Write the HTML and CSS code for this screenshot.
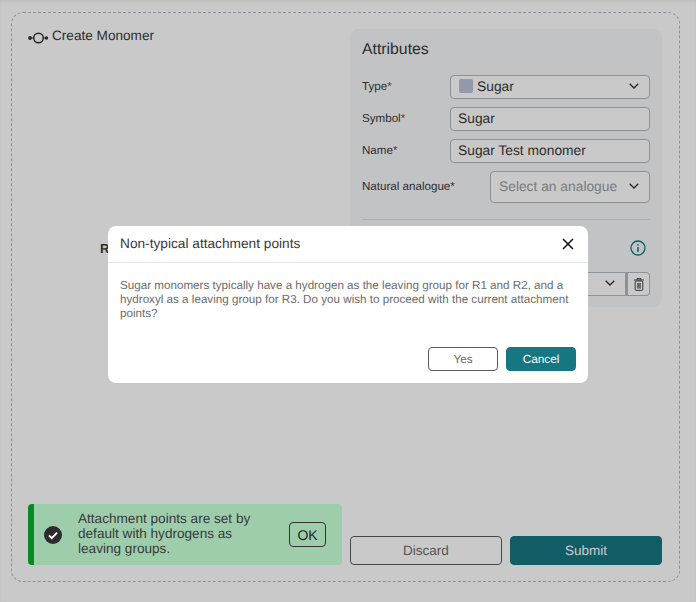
FILE: index.html
```html
<!DOCTYPE html>
<html lang="en">
<head>
    <meta charset="UTF-8">
    <title>Create Monomer</title>
    <link rel="stylesheet" href="styles.css">
</head>
<body>
<div class="wizard">
    <div class="left-col">
        <div class="title">
            <svg class="title-icon" width="21" height="12" viewBox="0 0 21 12">
                <circle cx="2" cy="6" r="1.9" fill="#333"/>
                <circle cx="18.5" cy="6" r="1.7" fill="#333"/>
                <path d="M3 6h3M15 6h3" stroke="#333" stroke-width="1.2"/>
                <circle cx="10.5" cy="6" r="4.8" fill="none" stroke="#333" stroke-width="1.5"/>
            </svg>
            <span>Create Monomer</span>
        </div>
        <span class="atom-label">R</span>
        <div class="toast">
            <svg class="toast-icon" width="18" height="18" viewBox="0 0 18 18">
                <circle cx="9" cy="9" r="9" fill="#2c2c2c"/>
                <path d="M5 9.4l2.8 2.7L13 6.6" fill="none" stroke="#fff" stroke-width="2"/>
            </svg>
            <p class="toast-text">Attachment points are set by default with hydrogens as leaving groups.</p>
            <button class="toast-ok">OK</button>
        </div>
    </div>
    <div class="right-col">
        <div class="panel">
            <h2 class="panel-title">Attributes</h2>
            <div class="row">
                <label class="row-label">Type<i>*</i></label>
                <div class="field field-select">
                    <span class="swatch"></span>
                    <span class="field-value">Sugar</span>
                    <svg class="chevron" width="10" height="6" viewBox="0 0 10 6"><path d="M.7.8L5 5l4.3-4.2" fill="none" stroke="#333" stroke-width="1.3"/></svg>
                </div>
            </div>
            <div class="row">
                <label class="row-label">Symbol<i>*</i></label>
                <div class="field">Sugar</div>
            </div>
            <div class="row">
                <label class="row-label">Name<i>*</i></label>
                <div class="field">Sugar Test monomer</div>
            </div>
            <div class="row">
                <label class="row-label">Natural analogue*</label>
                <div class="field field-select field-tall">
                    <span class="field-value placeholder">Select an analogue</span>
                    <svg class="chevron" width="10" height="6" viewBox="0 0 10 6"><path d="M.7.8L5 5l4.3-4.2" fill="none" stroke="#333" stroke-width="1.3"/></svg>
                </div>
            </div>
            <div class="divider"></div>
            <div class="points-head">
                <svg width="16" height="16" viewBox="0 0 16 16">
                    <circle cx="8" cy="8" r="7" fill="none" stroke="#167782" stroke-width="1.3"/>
                    <path d="M8 7v5M8 4v1.6" stroke="#167782" stroke-width="1.5"/>
                </svg>
            </div>
            <div class="point-row">
                <div class="field field-select point-select">
                    <svg class="chevron" width="10" height="6" viewBox="0 0 10 6"><path d="M.7.8L5 5l4.3-4.2" fill="none" stroke="#333" stroke-width="1.3"/></svg>
                </div>
                <button class="trash">
                    <svg width="10" height="13" viewBox="0 0 10 13">
                        <path d="M0 2h10M3 2V.6h4V2" fill="none" stroke="#444" stroke-width="1"/>
                        <rect x="1.2" y="3" width="7.6" height="9.4" rx="1" fill="none" stroke="#444" stroke-width="1"/>
                        <rect x="3" y="5" width="4" height="5.6" fill="#888"/>
                    </svg>
                </button>
            </div>
        </div>
        <div class="actions">
            <button class="btn btn-outline btn-big">Discard</button>
            <button class="btn btn-primary btn-big">Submit</button>
        </div>
    </div>
</div>

<div class="overlay">
    <div class="dialog">
        <div class="dialog-head">
            <span>Non-typical attachment points</span>
            <svg width="12" height="12" viewBox="0 0 12 12"><path d="M1 1l10 10M11 1L1 11" stroke="#111" stroke-width="1.5"/></svg>
        </div>
        <p class="dialog-body">Sugar monomers typically have a hydrogen as the leaving group for R1 and R2, and a hydroxyl as a leaving group for R3. Do you wish to proceed with the current attachment points?</p>
        <div class="dialog-foot">
            <button class="btn btn-outline">Yes</button>
            <button class="btn btn-primary">Cancel</button>
        </div>
    </div>
</div>
</body>
</html>
```

FILE: styles.css
```css
*{
    box-sizing: border-box;
    margin: 0;
    padding: 0;
}
html,body{
    height: 100%;
}
body{
    padding: 12px 16px 20px 11px;
    background-color: #fff;
    color: #3a3a3a;
    font-family: "Liberation Sans", Arial, sans-serif;
    text-rendering: geometricPrecision;
    overflow: hidden;
    box-shadow: inset 0 2px 3px rgba(0,0,0,.06);
}
button{
    font-family: inherit;
    text-rendering: inherit;
    cursor: pointer;
}
.wizard{
    display: grid;
    grid-template-columns: 314px 312px;
    column-gap: 8px;
    height: 100%;
    padding: 16px 17px 16px 16px;
    border: 1px dashed #b4b9c0;
    border-radius: 12px;
}
.left-col,.right-col{
    display: flex;
    flex-direction: column;
}
.left-col{
    position: relative;
}
.title{
    display: flex;
    align-items: center;
    gap: 3px;
    margin-top: -1px;
    font-size: 13.6px;
    line-height: 16px;
}
.title-icon{
    margin-top: 3px;
}
.atom-label{
    position: absolute;
    left: 72px;
    top: 212px;
    font-size: 13px;
    font-weight: bold;
}
.toast{
    position: relative;
    z-index: 2;
    display: flex;
    align-items: center;
    margin-top: auto;
    height: 61px;
    padding-left: 10px;
    padding-right: 16px;
    background-color: #9ecdac;
    border-left: 6px solid #068a24;
    border-radius: 4px;
}
.toast-icon{
    flex: none;
}
.toast-text{
    width: 180px;
    margin-left: 16px;
    margin-right: auto;
    margin-top: -3px;
    font-size: 13.6px;
    line-height: 15px;
}
.toast-ok{
    width: 37px;
    height: 25px;
    background: transparent;
    border: 1px solid #333;
    border-radius: 4px;
    color: #222;
    font-size: 14px;
}
.panel{
    height: 278px;
    padding: 12px 12px;
    background-color: #f6f8fa;
    border-radius: 8px;
}
.panel-title{
    margin-bottom: 16px;
    font-size: 15.8px;
    font-weight: normal;
    line-height: 18px;
}
.row{
    display: flex;
    align-items: center;
    justify-content: space-between;
    margin-bottom: 8px;
}
.row-label{
    padding-bottom: 1px;
    font-size: 11.6px;
    white-space: nowrap;
}
.row-label i{
    color: #c1143c;
    font-style: normal;
}
.field{
    display: flex;
    align-items: center;
    width: 200px;
    height: 24px;
    padding: 0 7px 2px;
    background-color: #fff;
    border: 1px solid #b4b9c0;
    border-radius: 4px;
    font-size: 13.8px;
}
.field-select{
    padding-left: 8px;
    padding-right: 10px;
}
.field-tall{
    width: 160px;
    height: 32px;
}
.swatch{
    width: 14px;
    height: 14px;
    margin-right: 4px;
    background-color: #bcc1dc;
    border-radius: 2px;
}
.placeholder{
    color: #9a9ea3;
}
.chevron{
    margin-left: auto;
}
.divider{
    height: 1px;
    margin-top: 16px;
    background-color: #dcdfe3;
}
.points-head{
    display: flex;
    justify-content: flex-end;
    margin-top: 20px;
    padding-right: 4px;
}
.point-row{
    display: flex;
    justify-content: flex-end;
    margin-top: 16px;
}
.point-select{
    width: 200px;
    border-radius: 4px 0 0 4px;
}
.trash{
    display: flex;
    align-items: center;
    justify-content: center;
    width: 24px;
    height: 24px;
    background-color: #fff;
    border: 1px solid #b4b9c0;
    border-left-width: 2px;
    border-radius: 0 4px 4px 0;
}
.actions{
    display: flex;
    gap: 8px;
    margin-top: auto;
}
.btn{
    width: 70px;
    height: 24px;
    border-radius: 4px;
    font-size: 11.8px;
}
.btn-big{
    width: 152px;
    height: 29px;
    font-size: 13.5px;
}
.btn-outline{
    background-color: #fff;
    border: 1px solid #5b5b5b;
    color: #6c6c6c;
}
.btn-primary{
    background-color: #167782;
    border: 1px solid #167782;
    color: #fff;
}
.overlay{
    position: fixed;
    top: 0;
    right: 0;
    bottom: 0;
    left: 0;
    z-index: 1;
    display: flex;
    align-items: flex-start;
    justify-content: center;
    padding-top: 226px;
    background-color: rgba(0,0,0,.21);
}
.dialog{
    width: 480px;
    height: 157px;
    background-color: #fff;
    border-radius: 8px;
}
.dialog-head{
    display: flex;
    align-items: center;
    justify-content: space-between;
    height: 37px;
    padding: 0 14px 1px 12px;
    border-bottom: 1px solid #e4e6e9;
    font-size: 13.7px;
}
.dialog-body{
    padding: 16px 12px 0;
    height: 84px;
    color: #6b6b6b;
    font-size: 11.65px;
    line-height: 14px;
}
.dialog-foot{
    display: flex;
    justify-content: flex-end;
    gap: 8px;
    padding-right: 12px;
}
```
